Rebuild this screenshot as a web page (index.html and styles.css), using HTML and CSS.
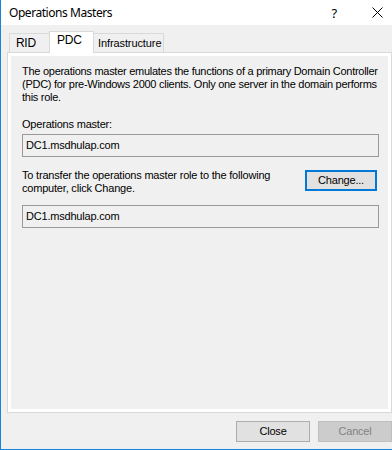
FILE: index.html
```html
<!DOCTYPE html>
<html>
<head>
<meta charset="utf-8">
<link rel="stylesheet" href="styles.css">
</head>
<body>
<div class="window">
  <div class="titlebar">
    <span class="title">Operations Masters</span>
    <span class="help">?</span>
    <span class="close-x">
      <svg width="11" height="11" viewBox="0 0 11 11"><path d="M0.5 0.5 L10.5 10.5 M10.5 0.5 L0.5 10.5" stroke="#000" stroke-width="1" fill="none"/></svg>
    </span>
  </div>
  <div class="tabs">
    <div class="tab tab-rid">RID</div>
    <div class="tab tab-pdc selected">PDC</div>
    <div class="tab tab-infra">Infrastructure</div>
  </div>
  <div class="panel">
    <div class="page">
      <p class="desc">The operations master emulates the functions of a primary Domain Controller<br>(PDC) for pre-Windows 2000 clients. Only one server in the domain performs<br>this role.</p>
      <div class="label">Operations master:</div>
      <div class="field">DC1.msdhulap.com</div>
      <div class="transfer">
        <div class="transfer-text">To transfer the operations master role to the following<br>computer, click Change.</div>
        <div class="btn btn-change">Change...</div>
      </div>
      <div class="field field-2">DC1.msdhulap.com</div>
    </div>
  </div>
  <div class="buttons">
    <div class="btn btn-close">Close</div>
    <div class="btn btn-cancel">Cancel</div>
  </div>
</div>
</body>
</html>
```
FILE: styles.css
```css
html, body {
  margin: 0;
  padding: 0;
}
body {
  width: 392px;
  height: 450px;
  overflow: hidden;
  background: #f0f0f0;
  font-family: "Liberation Sans", Arial, sans-serif;
  font-size: 11px;
  letter-spacing: -0.2px;
  color: #000;
}
.window {
  width: 392px;
  height: 450px;
  box-sizing: border-box;
  border-left: 1px solid #1883d7;
  border-bottom: 1px solid #1883d7;
  background: #f0f0f0;
}
.titlebar {
  height: 25px;
  background: #fff;
  display: flex;
  align-items: center;
  position: relative;
}
.title {
  font-family: "Noto Sans", "Open Sans", sans-serif;
  font-size: 12px;
  letter-spacing: -0.45px;
  margin-left: 8px;
  flex: 1;
  line-height: 16px;
}
.help {
  font-family: "Noto Sans", sans-serif;
  font-size: 13px;
  margin-right: 35px;
  line-height: 16px;
}
.close-x {
  width: 11px;
  height: 11px;
  margin-right: 9px;
  display: flex;
}
.tabs {
  display: flex;
  align-items: flex-end;
  height: 20px;
  margin-top: 7px;
  padding-left: 8px;
  position: relative;
  z-index: 2;
}
.tab {
  box-sizing: border-box;
  height: 19px;
  border: 1px solid #d9d9d9;
  border-bottom: none;
  background: #f0f0f0;
  line-height: 18px;
  padding: 0 6px;
}
.tab-rid {
  width: 41px;
  padding-left: 6px;
  font-size: 12px;
  letter-spacing: -0.3px;
}
.tab-pdc {
  width: 45px;
  padding-left: 7px;
  font-size: 12px;
  letter-spacing: -0.2px;
}
.tab-infra {
  width: 71px;
  padding-left: 4px;
  margin-left: -1px;
  letter-spacing: -0.1px;
}
.tab.selected {
  height: 22px;
  margin-bottom: -1px;
  background: #fff;
  margin-left: -1px;
  line-height: 17px;
}
.panel {
  margin-left: 6px;
  width: 385px;
  height: 361px;
  box-sizing: border-box;
  border: 1px solid #d9d9d9;
  background: #fff;
  padding: 3px;
  position: relative;
  z-index: 1;
}
.page {
  height: 100%;
  background: #f0f0f0;
  padding: 9px 0 0 11px;
  box-sizing: border-box;
}
.desc {
  margin: 0;
  line-height: 13px;
  white-space: nowrap;
  letter-spacing: -0.27px;
}
.label {
  margin-top: 14px;
  line-height: 13px;
}
.field {
  margin-top: 3px;
  width: 357px;
  height: 23px;
  box-sizing: border-box;
  border: 1px solid #9a9a9a;
  background: #f0f0f0;
  padding-left: 3px;
  line-height: 21px;
}
.transfer {
  margin-top: 12px;
  width: 357px;
  display: flex;
  justify-content: space-between;
  align-items: flex-start;
  padding-right: 2px;
  box-sizing: border-box;
}
.transfer-text {
  line-height: 13px;
  white-space: nowrap;
}
.btn {
  box-sizing: border-box;
  background: #e1e1e1;
  border: 1px solid #adadad;
  text-align: center;
}
.btn-change {
  margin-top: 1px;
  width: 72px;
  height: 21px;
  border: 2px solid #0078d7;
  line-height: 17px;
  font-size: 11px;
}
.field-2 {
  margin-top: 10px;
}
.buttons {
  display: flex;
  justify-content: flex-end;
  gap: 8px;
  margin-top: 8px;
}
.btn-close, .btn-cancel {
  width: 74px;
  height: 21px;
  line-height: 19px;
  font-size: 11px;
}
.btn-cancel {
  background: #cccccc;
  border-color: #bfbfbf;
  color: #838383;
}
```
